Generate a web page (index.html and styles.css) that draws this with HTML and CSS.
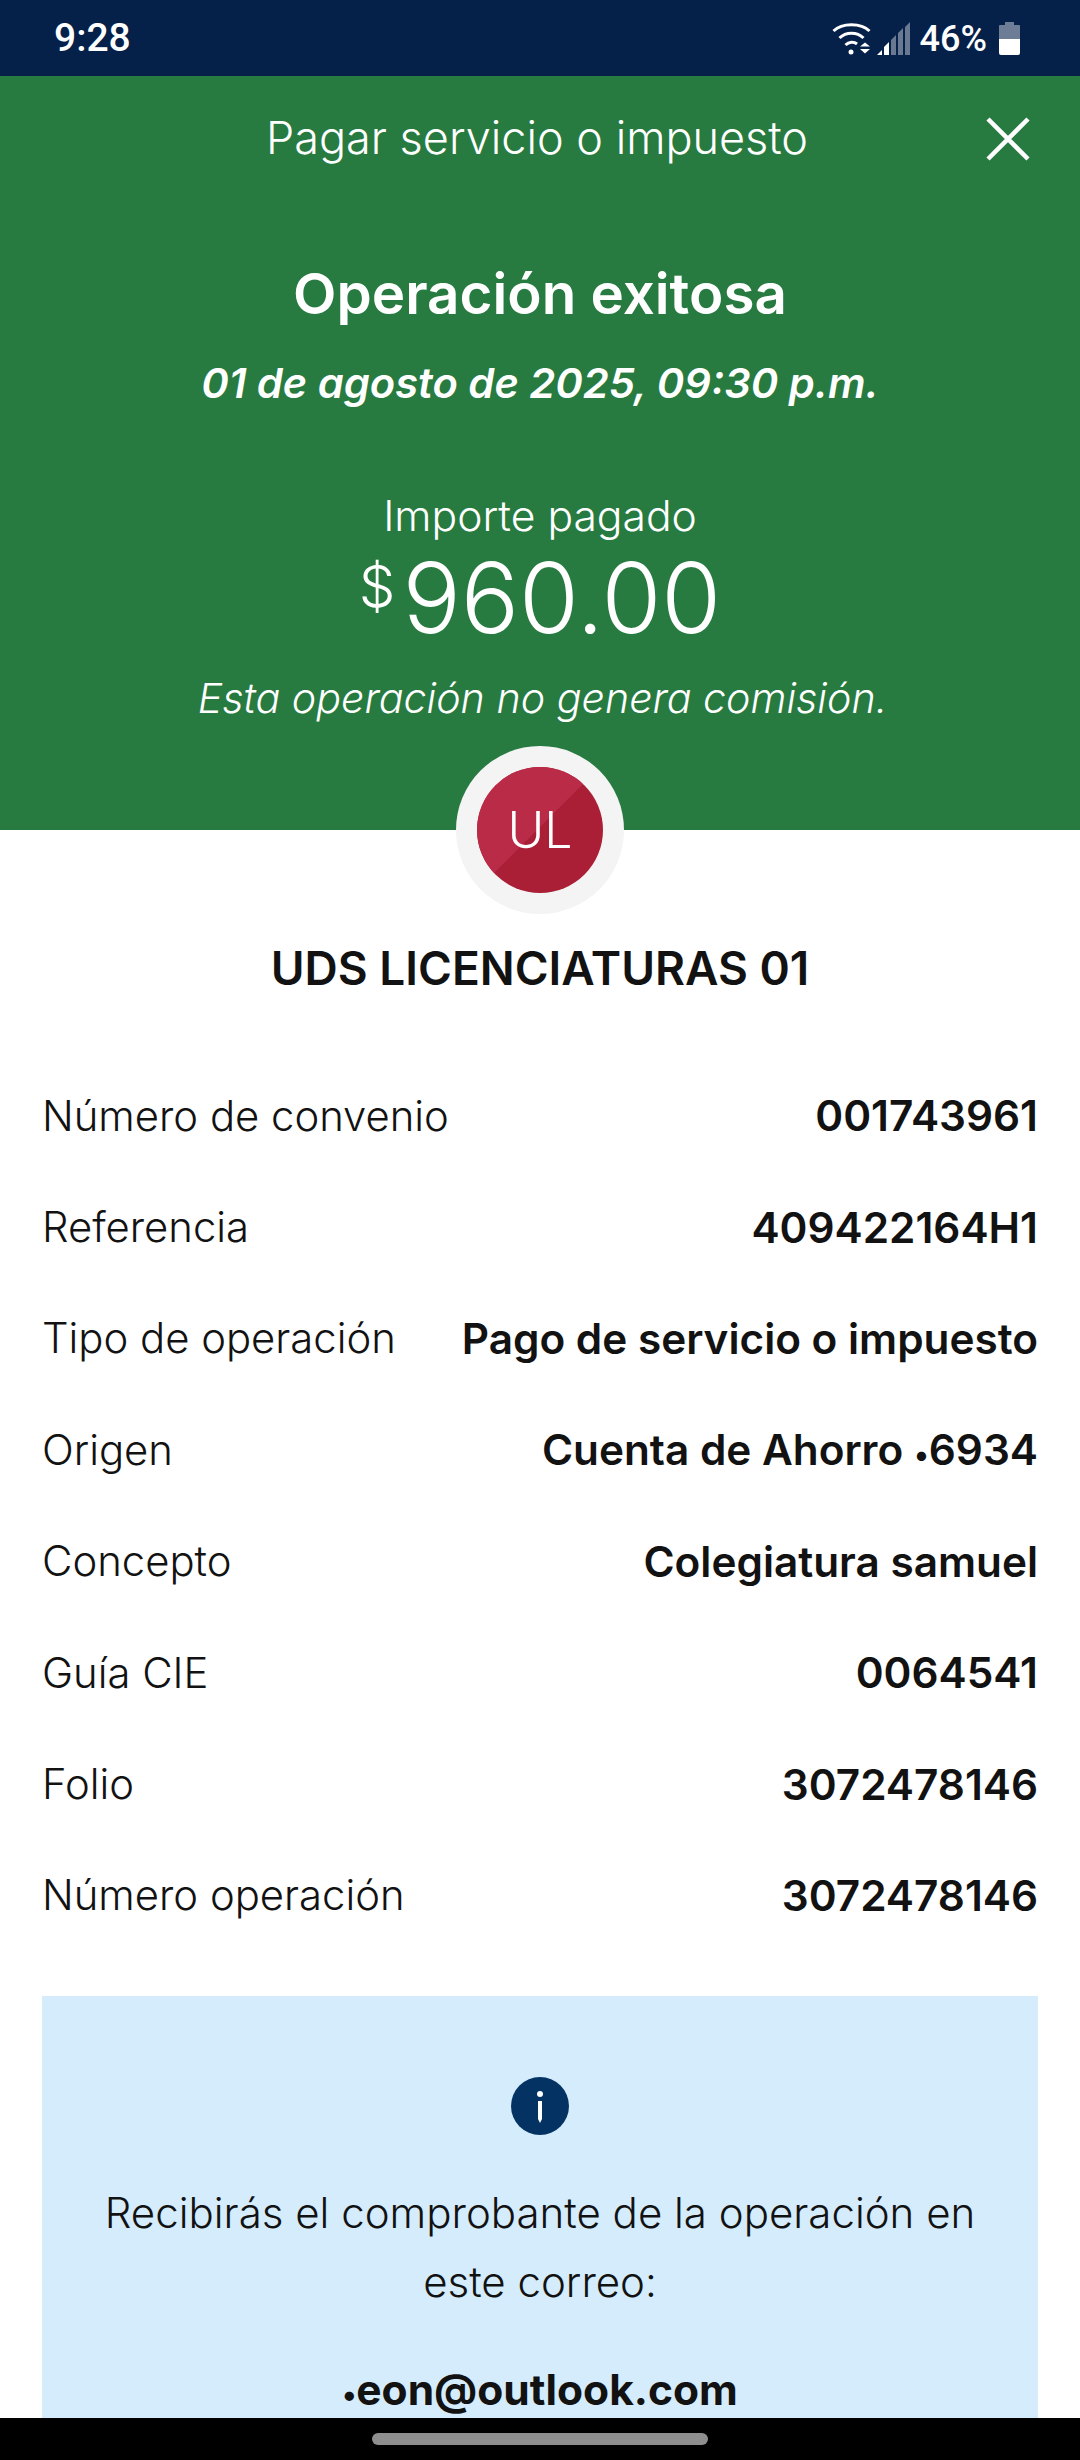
FILE: index.html
```html
<!DOCTYPE html>
<html lang="es">
<head>
<meta charset="utf-8">
<title>Operación exitosa</title>
<link rel="stylesheet" href="styles.css">
</head>
<body>
<div class="screen">
  <div class="status">
    <span class="time">9:28</span>
    <div class="status-right">
      <svg class="wifi" width="40" height="34" viewBox="0 0 40 34">
        <path d="M1.500 9 C10 0.500 29 0.500 37.500 9" fill="none" stroke="#fff" stroke-width="3"/>
        <path d="M7.500 16 C14 9.500 25 9.500 31.500 16" fill="none" stroke="#fff" stroke-width="3"/>
        <path d="M13.500 23 C17 19.500 22 19.500 25 22" fill="none" stroke="#fff" stroke-width="3"/>
        <circle cx="19" cy="30" r="2.500" fill="#fff"/>
        <path d="M28 24.500 L33 20.500 L38 24.500 Z M28 27 L38 27 L33 31.500 Z" fill="#fff"/>
      </svg>
      <svg class="signal" width="33" height="33" viewBox="0 0 33 33">
        <path d="M0 33 L5 28 V33 Z" fill="#fff"/>
        <path d="M7 33 V25 L12 20 V33 Z" fill="#fff"/>
        <path d="M14 33 V18 L19 13 V33 Z M21 33 V11 L26 6 V33 Z M28 33 V5 L33 0 V33 Z" fill="#fff" fill-opacity=".4"/>
      </svg>
      <span class="pct">46%</span>
      <svg class="batt" width="21" height="33" viewBox="0 0 21 33">
        <path d="M6 0 H15 V3 H20 A1 1 0 0 1 21 4 V17 H0 V4 A1 1 0 0 1 1 3 H6 Z" fill="#fff" fill-opacity=".42"/>
        <path d="M0 17 H21 V31 A2 2 0 0 1 19 33 H2 A2 2 0 0 1 0 31 Z" fill="#fff"/>
      </svg>
    </div>
  </div>

  <header class="hero">
    <div class="topbar">
      <h2 class="topbar-title">Pagar servicio o impuesto</h2>
      <svg class="close" width="44" height="44" viewBox="0 0 44 44"><path d="M2 2 L42 42 M42 2 L2 42" stroke="#fff" stroke-width="4.500" fill="none"/></svg>
    </div>
    <h1 class="hero-title">Operación exitosa</h1>
    <p class="hero-date">01 de agosto de 2025, 09:30 p.m.</p>
    <p class="hero-label">Importe pagado</p>
    <p class="amount"><span class="cur">$</span>960.00</p>
    <p class="hero-note">Esta operación no genera comisión.</p>
  </header>

  <div class="avatar-ring">
    <div class="avatar"><svg class="avatar-bg" width="126" height="126" viewBox="0 0 126 126"><path d="M0 0 H126 L0 126 Z" fill="#b92b47" transform="translate(-1 -2)"/></svg><span class="avatar-text">UL</span></div>
  </div>
  <h3 class="merchant">UDS LICENCIATURAS 01</h3>

  <dl class="rows">
    <div class="row"><dt>Número de convenio</dt><dd>001743961</dd></div>
    <div class="row"><dt>Referencia</dt><dd>409422164H1</dd></div>
    <div class="row"><dt>Tipo de operación</dt><dd>Pago de servicio o impuesto</dd></div>
    <div class="row"><dt>Origen</dt><dd>Cuenta de Ahorro <span class="dot">•</span>6934</dd></div>
    <div class="row"><dt>Concepto</dt><dd>Colegiatura samuel</dd></div>
    <div class="row"><dt>Guía CIE</dt><dd>0064541</dd></div>
    <div class="row"><dt>Folio</dt><dd>3072478146</dd></div>
    <div class="row"><dt>Número operación</dt><dd>3072478146</dd></div>
  </dl>

  <section class="notice">
    <svg class="info" width="58" height="58" viewBox="0 0 58 58"><circle cx="29" cy="29" r="29" fill="#043263"/><circle cx="29" cy="17" r="3" fill="#fff"/><path d="M27 24 H31 V42 L29 46 L27 42 Z" fill="#fff"/></svg>
    <p class="notice-text">Recibirás el comprobante de la operación en este correo:</p>
    <p class="notice-mail"><span class="dot">•</span>eon@outlook.com</p>
  </section>

  <div class="navbar"><span class="pill"></span></div>
</div>
</body>
</html>
```
FILE: styles.css
```css
* { box-sizing: border-box; margin: 0; padding: 0; }
html, body { width: 1080px; height: 2460px; overflow: hidden; background: #fff; }
body { font-family: "Inter", "Liberation Sans", sans-serif; color: #121212; }
.screen { position: relative; width: 1080px; height: 2460px; overflow: hidden; }

.status { height: 76px; background: #052049; color: #fff; display: flex; align-items: center; justify-content: space-between; padding: 0 60px 0 54px; font-family: "Roboto", sans-serif; font-weight: 500; }
.time { font-size: 39px; }
.status-right { display: flex; align-items: center; padding-top: 1px; }
.wifi { margin-right: 5px; }
.signal { margin-right: 10px; }
.pct { font-size: 36px; margin-right: 12px; }

.hero { height: 754px; background: #287b40; color: #fff; text-align: center; display: flex; flex-direction: column; align-items: center; }
.topbar { width: 100%; height: 124px; display: flex; align-items: center; justify-content: center; position: relative; padding: 0 6px 2px 0; }
.topbar-title { font-size: 45px; font-weight: 300; }
.close { position: absolute; right: 50px; top: 41px; }
.hero-title { font-size: 56.500px; font-weight: 600; line-height: 70px; margin-top: 59px; }
.hero-date { font-size: 41.700px; font-weight: 600; font-style: italic; line-height: 54px; margin-top: 27px; }
.hero-label { font-size: 42.600px; font-weight: 300; line-height: 50px; margin-top: 81px; }
.amount { font-size: 97px; font-weight: 300; line-height: 100px; margin-top: -5px; }
.cur { font-size: 58px; vertical-align: 26px; margin-right: 7px; }
.hero-note { font-size: 41.200px; font-weight: 300; font-style: italic; line-height: 50px; margin-top: 25px; padding-left: 5px; }

.avatar-ring { width: 168px; height: 168px; border-radius: 50%; background: #f4f4f4; margin: -84px auto 0; display: flex; align-items: center; justify-content: center; position: relative; }
.avatar { width: 126px; height: 126px; border-radius: 50%; background: #aa1f35; color: #fff; position: relative; overflow: hidden; display: flex; align-items: center; justify-content: center; }
.avatar-bg { position: absolute; inset: 0; }
.avatar-text { position: relative; font-size: 50px; font-weight: 300; }

.merchant { text-align: center; font-size: 46px; font-weight: 600; line-height: 56px; margin-top: 26px; }

.rows { padding: 0 42px; margin-top: 64px; }
.row { height: 111.400px; display: flex; align-items: center; justify-content: space-between; }
dt { font-size: 41.800px; font-weight: 300; }
dd { font-size: 42.300px; font-weight: 600; }
.dot { font-size: .7em; }

.notice { margin: 45px 42px 0; height: 500px; background: #d4ecfc; display: flex; flex-direction: column; align-items: center; padding-top: 81px; text-align: center; }
.notice-text { width: 880px; font-size: 42px; font-weight: 300; line-height: 69px; margin-top: 43px; }
.notice-mail { font-size: 42.500px; font-weight: 700; margin-top: 48px; }

.navbar { position: absolute; left: 0; right: 0; bottom: 0; height: 42px; background: #000; display: flex; justify-content: center; padding-top: 15px; }
.pill { width: 336px; height: 12px; border-radius: 6px; background: #8e8e8e; }
```
